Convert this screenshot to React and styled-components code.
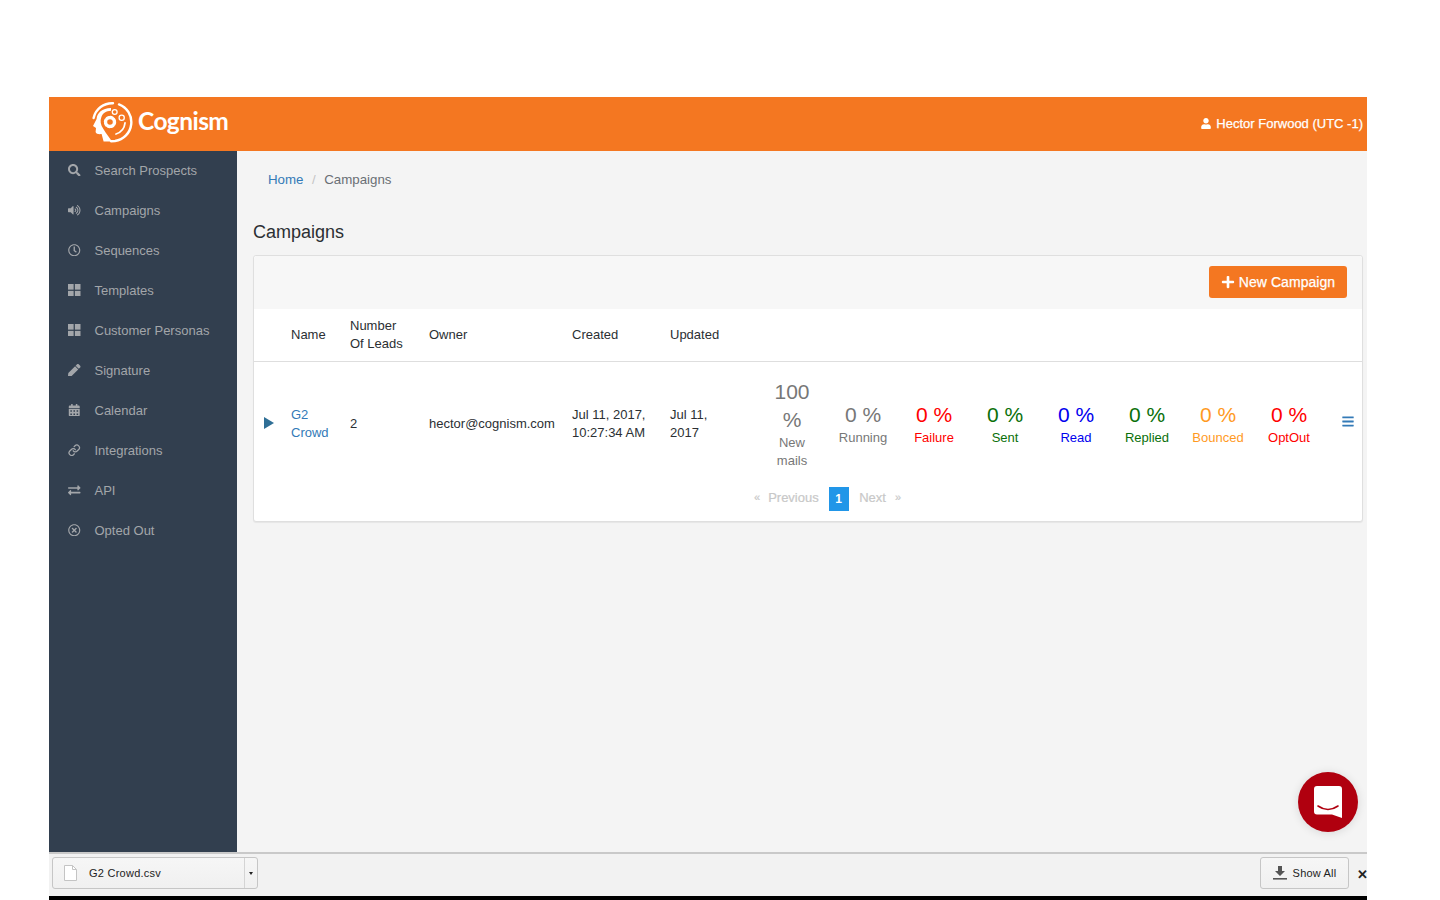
import React from 'react';
import styled, { createGlobalStyle } from 'styled-components';
import { FaSearch, FaVolumeUp, FaRegClock, FaCalendarAlt, FaExchangeAlt, FaRegTimesCircle, FaUser, FaPlus, FaBars, FaPen } from 'react-icons/fa';
import { Link as LinkIcon } from 'lucide-react';

const ORANGE = '#f47721';

const Global = createGlobalStyle`
  html, body { margin: 0; padding: 0; background: #fff; }
  body { font-family: "Liberation Sans", Arial, sans-serif; font-size: 13px; color: #2b2f33; }
  * { box-sizing: border-box; }
`;

const Page = styled.div`
  width: 1440px; height: 900px; padding: 97px 73px 0 49px; overflow: hidden;
`;
const Frame = styled.div`
  position: relative; width: 1318px; height: 803px; display: flex; flex-direction: column; background: #f4f4f4;
`;
const TopBar = styled.header`
  height: 54px; flex: none; background: ${ORANGE}; display: flex; align-items: center; justify-content: space-between;
  padding: 0 4px 0 42px; color: #fff;
`;
const Brand = styled.div`display: flex; align-items: center; gap: 5px; margin-top: -4px;`;
const BrandName = styled.span`
  font-family: "Lato", sans-serif; font-weight: 700; font-size: 24.5px; letter-spacing: -0.55px; color: #fff; margin-top: -3px;
`;
const UserName = styled.div`
  display: flex; align-items: center; gap: 5px; font-size: 13px; color: #fff; -webkit-text-stroke: 0.25px #fff; margin-top: -2px;
  svg { width: 10px; height: 11px; }
`;
const Body = styled.div`flex: 1; display: flex; min-height: 0;`;
const Sidebar = styled.nav`
  width: 188px; flex: none; background: #323f4f; padding: 0;
`;
const NavItem = styled.div`
  height: 40px; display: flex; align-items: center; padding: 0 0 2px 19px; color: #a3a6aa; font-size: 13px;
`;
const NavIcon = styled.span`
  width: 26.5px; flex: none; display: flex; align-items: center; color: #a3a6aa;
  svg { width: 12.5px; height: 12.5px; display: block; }
`;
const Main = styled.main`flex: 1; padding: 0 4px 0 16px; min-width: 0;`;
const Crumbs = styled.div`
  height: 57px; padding: 21px 0 0 15px; display: flex; gap: 8.5px; color: #6a6f75; font-size: 13.3px; line-height: 15px;
`;
const CrumbLink = styled.span`color: #337ab7;`;
const CrumbSep = styled.span`color: #c4c4c4;`;
const Title = styled.h1`
  margin: 0; height: 47px; padding-top: 12px; font-size: 18px; font-weight: 400; line-height: 24px; color: #2b2f33;
`;
const Panel = styled.section`
  width: 1110px; height: 267px; background: #fff; border: 1px solid #dfdfdf; border-radius: 3px; box-shadow: 0 1px 1px rgba(0,0,0,.06);
`;
const PanelHead = styled.div`
  height: 53px; background: #f7f7f7; display: flex; justify-content: flex-end; padding: 10px 15px 0 0; border-radius: 3px 3px 0 0;
`;
const PrimaryButton = styled.button`
  width: 138px; height: 32px; border: 0; border-radius: 3px; background: ${ORANGE}; color: #fff; font: 14px "Liberation Sans", sans-serif; letter-spacing: 0.05px;
  display: flex; align-items: center; justify-content: center; gap: 4px; padding: 0; -webkit-text-stroke: 0.25px #fff;
  svg { width: 14px; height: 14px; }
`;
const cols = '37px 59px 79px 143px 98px 86.5px repeat(8, 71px) 1fr';
const HeadRow = styled.div`
  height: 53px; display: grid; grid-template-columns: ${cols}; align-items: center; border-bottom: 1px solid #dedede; line-height: 18px; color: #2b2f33;
`;
const DataRow = styled.div`
  height: 118px; display: grid; grid-template-columns: ${cols}; align-items: center; line-height: 18px;
`;
const HeadCell = styled.div`grid-column: ${p => p.$col}; max-width: 60px;`;
const Cell = styled.div`padding-right: 4px; margin-top: 6px; max-width: ${p => p.$max || 'none'};`;
const NameLink = styled.span`color: #337ab7; display: block; width: 40px;`;
const Arrow = styled.svg`margin-left: 10px; margin-top: 4px; display: block;`;
const Stat = styled.div`
  text-align: center; color: ${p => p.$color}; margin-top: 5px;
`;
const StatValue = styled.div`font-size: 21px; line-height: 28px; max-width: 42px; margin: 0 auto;`;
const StatLabel = styled.div`font-size: 13px; line-height: 18px; max-width: 56px; margin: 0 auto; color: ${p => p.$color};`;
const MenuCell = styled.div`
  padding-left: 17px; color: #337ab7; display: flex; svg { width: 12px; height: 13px; }
`;
const Pager = styled.div`
  display: flex; align-items: center; padding: 0 0 2px 500px; height: 24px; margin-top: 6px; color: #c8c8c8; font-size: 13px; -webkit-text-stroke: 0.2px #c8c8c8;
`;
const PagerMark = styled.span`font-size: 11px; margin-right: ${p => p.$gap || 0}px; margin-left: ${p => p.$before || 0}px;`;
const PageNo = styled.span`
  width: 20px; height: 24px; background: #2196e8; color: #fff; font-weight: 700; font-size: 12px; display: flex; align-items: center; justify-content: center; margin: 3px 10.5px 0 10px; -webkit-text-stroke: 0;
`;
const DownloadBar = styled.footer`
  height: 44px; flex: none; background: #f2f2f2; border-top: 2px solid #c9c9c9; display: flex; align-items: center; justify-content: space-between; padding: 0 0 4px 3px;
`;
const Chip = styled.div`
  height: 32px; border: 1px solid #c6c6c6; border-radius: 3px; background: linear-gradient(#f6f6f6, #f0f0f0); display: flex; align-items: center; color: #222; font-size: 11px;
`;
const FileChip = styled(Chip)`width: 206px; padding-left: 11px;`;
const FileName = styled.span`margin-left: 12px; flex: 1; letter-spacing: 0.25px;`;
const Caret = styled.span`
  width: 13px; height: 100%; border-left: 1px solid #d4d4d4; display: flex; align-items: center; justify-content: center;
  &::after { content: ""; border: 2.5px solid transparent; border-top: 3px solid #222; margin-top: 2px; }
`;
const RightTools = styled.div`display: flex; align-items: center; gap: 8px;`;
const ShowAll = styled(Chip)`width: 89px; justify-content: center; gap: 6px; letter-spacing: 0.2px;`;
const CloseX = styled.span`font-size: 13px; font-weight: 700; color: #222; width: 10px; line-height: 1; margin-top: 3px;`;
const BottomStrip = styled.div`height: 4px; flex: none; background: #000;`;
const ChatBubble = styled.div`
  position: absolute; left: 1249px; top: 675px; width: 60px; height: 60px; border-radius: 50%; background: #b0000f;
  display: flex; align-items: center; justify-content: center; box-shadow: 0 1px 10px rgba(0,0,0,.12);
`;

const Grid = () => (
  <svg viewBox="0 0 12 12" fill="currentColor"><rect width="5.4" height="5.4" /><rect x="6.6" width="5.4" height="5.4" /><rect y="6.6" width="5.4" height="5.4" /><rect x="6.6" y="6.6" width="5.4" height="5.4" /></svg>
);

const Logo = () => (
  <svg width="42" height="42" viewBox="0 0 42 42" fill="none" stroke="#fff" strokeLinecap="round">
    <path d="M22 2.2 A19 19 0 0 0 2.6 17" strokeWidth="2.4" />
    <path d="M28 3.4 A19 19 0 0 1 24 40 L20 40.2" strokeWidth="2.4" />
    <path d="M20 7 C11 7 6 12 5.6 18 L2 25 L5 27 L4.6 31 C5 33 8 33.4 10.6 33 L12.6 40.4 L21 40.4 C18 36 15 32.5 12.4 28 C9.6 24 8.8 20 10.4 16 C12 12 15 10 20 9.8 Z" fill="#fff" stroke="none" />
    <circle cx="19" cy="21" r="4.8" strokeWidth="2.8" strokeDasharray="2.2 1.55" />
    <circle cx="19" cy="21" r="3.4" strokeWidth="1.2" />
    <circle cx="23.7" cy="11" r="2.4" strokeWidth="1.3" />
    <circle cx="30.7" cy="16.7" r="2.6" strokeWidth="1.3" />
    <path d="M34 22 A13 13 0 0 1 25 33" strokeWidth="1.8" />
  </svg>
);

const nav = [
  ['Search Prospects', <FaSearch />],
  ['Campaigns', <FaVolumeUp />],
  ['Sequences', <FaRegClock />],
  ['Templates', <Grid />],
  ['Customer Personas', <Grid />],
  ['Signature', <FaPen />],
  ['Calendar', <FaCalendarAlt />],
  ['Integrations', <LinkIcon strokeWidth={2.4} />],
  ['API', <FaExchangeAlt />],
  ['Opted Out', <FaRegTimesCircle />],
];

const stats = [
  ['100 %', 'New mails', '#777'],
  ['0 %', 'Running', '#777'],
  ['0 %', 'Failure', '#f00'],
  ['0 %', 'Sent', '#0a700a'],
  ['0 %', 'Read', '#0000ee'],
  ['0 %', 'Replied', '#0a700a'],
  ['0 %', 'Bounced', '#ff9a1f'],
  ['0 %', 'OptOut', '#f00'],
];

export default function App() {
  return (
    <Page>
      <Global />
      <Frame>
        <TopBar>
          <Brand><Logo /><BrandName>Cognism</BrandName></Brand>
          <UserName><FaUser />Hector Forwood (UTC -1)</UserName>
        </TopBar>
        <Body>
          <Sidebar>
            {nav.map(([label, icon]) => (
              <NavItem key={label}><NavIcon>{icon}</NavIcon>{label}</NavItem>
            ))}
          </Sidebar>
          <Main>
            <Crumbs><CrumbLink>Home</CrumbLink><CrumbSep>/</CrumbSep><span>Campaigns</span></Crumbs>
            <Title>Campaigns</Title>
            <Panel>
              <PanelHead><PrimaryButton><FaPlus />New Campaign</PrimaryButton></PanelHead>
              <HeadRow>
                <HeadCell $col="2">Name</HeadCell>
                <HeadCell $col="3">Number Of Leads</HeadCell>
                <HeadCell $col="4">Owner</HeadCell>
                <HeadCell $col="5">Created</HeadCell>
                <HeadCell $col="6">Updated</HeadCell>
              </HeadRow>
              <DataRow>
                <Arrow width="10" height="12" viewBox="0 0 10 12"><path d="M0 0 L10 6 L0 12 Z" fill="#2f6f96" /></Arrow>
                <Cell><NameLink>G2 Crowd</NameLink></Cell>
                <Cell>2</Cell>
                <Cell>hector@cognism.com</Cell>
                <Cell>Jul 11, 2017, 10:27:34 AM</Cell>
                <Cell $max="50px">Jul 11, 2017</Cell>
                {stats.map(([v, l, c]) => (
                  <Stat key={l} $color={c}><StatValue>{v}</StatValue><StatLabel $color={c}>{l}</StatLabel></Stat>
                ))}
                <MenuCell><FaBars /></MenuCell>
              </DataRow>
              <Pager>
                <PagerMark $gap={8}>«</PagerMark>Previous<PageNo>1</PageNo>Next<PagerMark $before={9}>»</PagerMark>
              </Pager>
            </Panel>
          </Main>
        </Body>
        <DownloadBar>
          <FileChip>
            <svg width="13" height="16" viewBox="0 0 13 16" fill="#fff" stroke="#c4c4c4"><path d="M.5.5h8l4 4v11h-12z" /><path d="M8.5.5v4h4" fill="none" /></svg>
            <FileName>G2 Crowd.csv</FileName>
            <Caret />
          </FileChip>
          <RightTools>
            <ShowAll>
              <svg width="14" height="14" viewBox="0 0 14 14" fill="#555"><path d="M5 0h4v5h3L7 10 2 5h3z" /><rect y="12" width="14" height="1.6" /></svg>
              Show All
            </ShowAll>
            <CloseX>✕</CloseX>
          </RightTools>
        </DownloadBar>
        <BottomStrip />
        <ChatBubble>
          <svg width="28" height="32" viewBox="0 0 28 32">
            <path d="M3 0h22a3 3 0 0 1 3 3v29l-10-3.4H3a3 3 0 0 1-3-3V3a3 3 0 0 1 3-3z" fill="#fff" />
            <path d="M4 20 Q14 27 24 20" stroke="#b0000f" strokeWidth="1.6" fill="none" strokeLinecap="round" />
          </svg>
        </ChatBubble>
      </Frame>
    </Page>
  );
}
